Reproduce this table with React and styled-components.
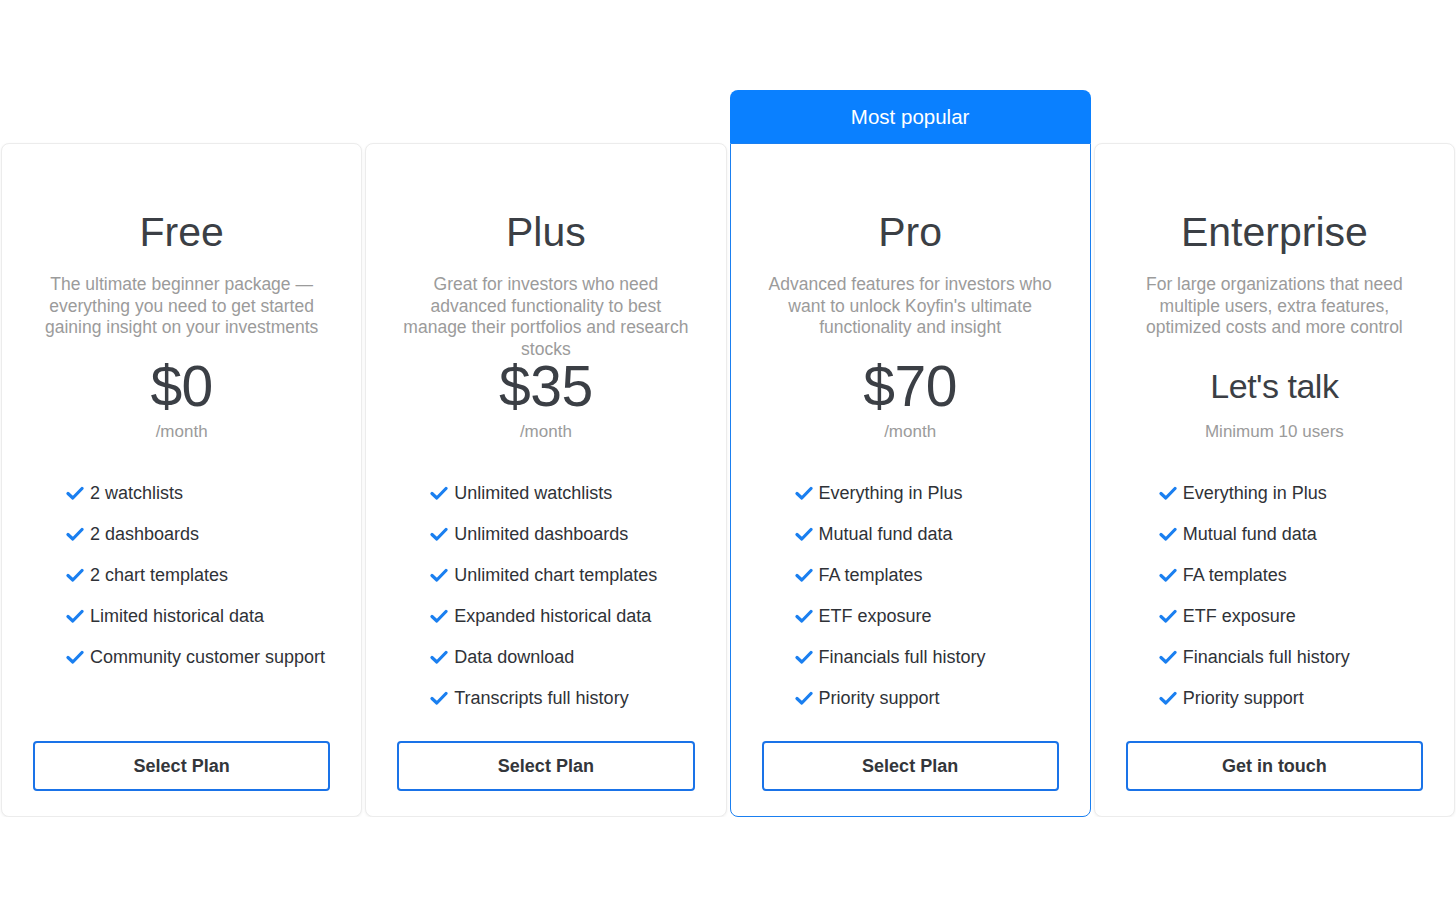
import React from "react"
import styled, { createGlobalStyle } from "styled-components"

const GlobalStyle = createGlobalStyle`
    body {
        margin: 0;
        background: #ffffff;
        font-family: "Liberation Sans", Arial, sans-serif;
    }
`

const Page = styled.div`
    display: grid;
    grid-template-columns: repeat(4, 1fr);
    gap: 3px;
    padding: 90px 1px 0 1px;
    align-items: end;
`

const Column = styled.div`
    display: flex;
    flex-direction: column;
`

const Banner = styled.div`
    height: 53px;
    display: flex;
    align-items: center;
    justify-content: center;
    background: #0a80ff;
    color: #ffffff;
    font-size: 20.5px;
    border-radius: 8px 8px 0 0;
`

const Card = styled.div`
    display: flex;
    flex-direction: column;
    align-items: center;
    height: 674px;
    box-sizing: border-box;
    padding: 64px 31px 25px;
    background: #ffffff;
    border: 1px solid ${(p) => (p.$featured ? "#1a7ff0" : "#ececec")};
    border-radius: ${(p) => (p.$featured ? "0 0 8px 8px" : "8px")};
    box-shadow: ${(p) => (p.$featured ? "none" : "0 1px 3px rgba(0, 0, 0, 0.06)")};
`

const Title = styled.h2`
    margin: 0;
    font-size: 41px;
    line-height: 48px;
    font-weight: 400;
    color: #3b3f45;
`

const Description = styled.p`
    margin: 18px 0 0;
    height: 64px;
    font-size: 17.5px;
    line-height: 21.5px;
    color: #9b9b9b;
    text-align: center;
`

const Price = styled.div`
    margin-top: 20px;
    height: 56px;
    display: flex;
    align-items: center;
    font-size: ${(p) => (p.$small ? "34px" : "57px")};
    color: #3b3f45;
    letter-spacing: -0.5px;
`

const Period = styled.div`
    margin-top: 8px;
    font-size: 17px;
    line-height: 20px;
    color: #9b9b9b;
`

const Features = styled.ul`
    list-style: none;
    margin: 31px 0 0;
    padding: 0 0 0 33px;
    align-self: stretch;
`

const Feature = styled.li`
    display: flex;
    align-items: center;
    gap: 6px;
    height: 41px;
    font-size: 18px;
    color: #2f3237;
`

const Button = styled.button`
    margin-top: auto;
    align-self: stretch;
    height: 50px;
    background: #ffffff;
    border: 2px solid #1a73e8;
    border-radius: 4px;
    font-family: inherit;
    font-size: 18px;
    font-weight: 700;
    color: #33363b;
    cursor: pointer;
`

const Check = () => (
    <svg width="18" height="15" viewBox="0 0 18 15">
        <path d="M2 7.5 L6.8 12 L16 2.5" fill="none" stroke="#1a7ff0" strokeWidth="3.2" strokeLinecap="round" strokeLinejoin="round" />
    </svg>
)

const plans = [
    {
        name: "Free",
        description: "The ultimate beginner package — everything you need to get started gaining insight on your investments",
        price: "$0",
        period: "/month",
        features: ["2 watchlists", "2 dashboards", "2 chart templates", "Limited historical data", "Community customer support"],
        action: "Select Plan",
    },
    {
        name: "Plus",
        description: "Great for investors who need advanced functionality to best manage their portfolios and research stocks",
        price: "$35",
        period: "/month",
        features: [
            "Unlimited watchlists",
            "Unlimited dashboards",
            "Unlimited chart templates",
            "Expanded historical data",
            "Data download",
            "Transcripts full history",
        ],
        action: "Select Plan",
    },
    {
        name: "Pro",
        featured: true,
        description: "Advanced features for investors who want to unlock Koyfin's ultimate functionality and insight",
        price: "$70",
        period: "/month",
        features: ["Everything in Plus", "Mutual fund data", "FA templates", "ETF exposure", "Financials full history", "Priority support"],
        action: "Select Plan",
    },
    {
        name: "Enterprise",
        description: "For large organizations that need multiple users, extra features, optimized costs and more control",
        price: "Let's talk",
        small: true,
        period: "Minimum 10 users",
        features: ["Everything in Plus", "Mutual fund data", "FA templates", "ETF exposure", "Financials full history", "Priority support"],
        action: "Get in touch",
    },
]

const PlanCard = ({ plan }) => (
    <Column>
        {plan.featured && <Banner>Most popular</Banner>}
        <Card $featured={plan.featured}>
            <Title>{plan.name}</Title>
            <Description>{plan.description}</Description>
            <Price $small={plan.small}>{plan.price}</Price>
            <Period>{plan.period}</Period>
            <Features>
                {plan.features.map((f) => (
                    <Feature key={f}>
                        <Check />
                        {f}
                    </Feature>
                ))}
            </Features>
            <Button>{plan.action}</Button>
        </Card>
    </Column>
)

export default function App() {
    return (
        <>
            <GlobalStyle />
            <Page>
                {plans.map((p) => (
                    <PlanCard key={p.name} plan={p} />
                ))}
            </Page>
        </>
    )
}
